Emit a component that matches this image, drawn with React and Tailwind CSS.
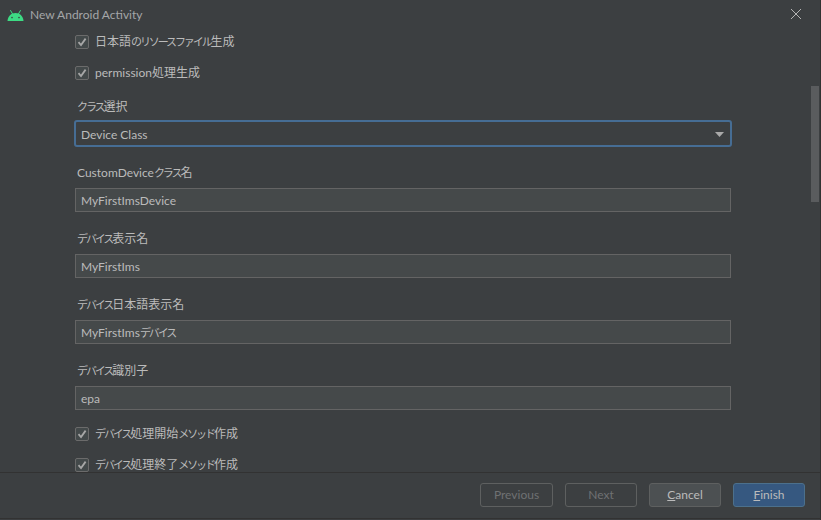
const font = { fontFamily: 'Lato, "Noto Sans CJK JP", "Liberation Sans", sans-serif' };

// Reference uses a narrow UI font: kana are squeezed, kanji stay full width
function Txt({ children }) {
  const parts = children.split(/([\u3040-\u30ff]+|[\u4e00-\u9fff]+)/);
  return (
    <>
      {parts.map((p, i) => {
        if (/[\u3040-\u30ff]/.test(p)) return <span key={i} className="text-[11px] tracking-[-2.1px]">{p}</span>;
        if (/[\u4e00-\u9fff]/.test(p)) return <span key={i} className="text-[12px]">{p}</span>;
        return <span key={i}>{p}</span>;
      })}
    </>
  );
}

function Check({ label, className }) {
  return (
    <div className={"flex items-center h-[15px] " + className}>
      <span className="w-[14px] h-[14px] flex items-center justify-center rounded-[2px] border border-[#6b6b6b] bg-[#43494a] shrink-0">
        <svg width="10" height="10" viewBox="0 0 10 10" fill="none">
          <path d="M1.5 5.2 L4 8 L8.6 1.6" stroke="#a7a7a7" strokeWidth="1.8" />
        </svg>
      </span>
      <span className="ml-[6px] text-[12px] leading-[15px] text-[#bbbbbb] whitespace-nowrap"><Txt>{label}</Txt></span>
    </div>
  );
}

function Field({ label, value, className }) {
  return (
    <div className={"flex flex-col " + className}>
      <div className="pl-[2px] h-[16px] text-[12px] leading-[18px] text-[#bbbbbb]"><Txt>{label}</Txt></div>
      <div className="mt-[8px] h-[24px] border border-[#646464] bg-[#45494a] pl-[5px] text-[12px] leading-[24px] text-[#bbbbbb]"><Txt>{value}</Txt></div>
    </div>
  );
}

function FooterButton({ children, className }) {
  return (
    <div className={"h-[24px] flex items-center justify-center rounded-[3px] border text-[12px] " + className}>{children}</div>
  );
}

export default function App() {
  return (
    <div style={font} className="relative w-[821px] h-[520px] bg-[#3c3f41] flex flex-col overflow-hidden border-r border-[#323232]">
      {/* Title bar */}
      <div className="h-[30px] shrink-0 flex items-center pl-[7px] pr-[18px]">
        <svg width="17" height="11" viewBox="0 0 17 11" fill="#3ddc84">
          <path d="M0.5 11 C0.8 6.5 4 3 8.5 3 C13 3 16.2 6.5 16.5 11 Z" />
          <path d="M3.4 0.2 L5.6 4 M13.6 0.2 L11.4 4" stroke="#3ddc84" strokeWidth="1" />
          <circle cx="5" cy="7.6" r="0.8" fill="#3c3f41" />
          <circle cx="12" cy="7.6" r="0.8" fill="#3c3f41" />
        </svg>
        <span className="ml-[6px] text-[12px] text-[#a4a6a8]">New Android Activity</span>
        <svg className="ml-auto -mt-[2px]" width="12" height="12" viewBox="0 0 12 12" stroke="#b4b4b4" strokeWidth="1">
          <path d="M1 1 L11 11 M11 1 L1 11" />
        </svg>
      </div>

      {/* Scrolling form */}
      <div className="h-[442px] shrink-0 overflow-hidden pl-[75px] pr-[89px] pt-[4px]">
        <Check label="日本語のリソースファイル生成" />
        <Check label="permission処理生成" className="mt-[16px]" />
        <div className="mt-[18px] pl-[2px] h-[16px] text-[12px] leading-[18px] text-[#bbbbbb]"><Txt>クラス選択</Txt></div>
        <div className="mt-[6px] -mx-[1px] h-[27px] border-2 border-[#466d94] rounded-[3px] bg-[#3c3f41] flex items-center pl-[5px] pr-[6px] pt-[2px] text-[12px] text-[#bbbbbb]">
          Device Class
          <svg className="ml-auto" width="9" height="5" viewBox="0 0 9 5" fill="#a9a9a9">
            <path d="M0 0 H9 L4.5 5 Z" />
          </svg>
        </div>
        <Field label="CustomDeviceクラス名" value="MyFirstImsDevice" className="mt-[17px]" />
        <Field label="デバイス表示名" value="MyFirstIms" className="mt-[18px]" />
        <Field label="デバイス日本語表示名" value="MyFirstImsデバイス" className="mt-[18px]" />
        <Field label="デバイス識別子" value="epa" className="mt-[18px]" />
        <Check label="デバイス処理開始メソッド作成" className="mt-[16px]" />
        <Check label="デバイス処理終了メソッド作成" className="mt-[16px]" />
      </div>

      {/* Footer */}
      <div className="flex-1 border-t border-b border-[#323232] flex items-center justify-end pr-[15px] pb-[2px] mb-[1px] gap-[12px]">
        <FooterButton className="w-[73px] border-[#5e6060] text-[#6f7173]">Previous</FooterButton>
        <FooterButton className="w-[72px] border-[#5e6060] text-[#6f7173]">Next</FooterButton>
        <FooterButton className="w-[72px] border-[#5e6060] bg-[#4c5052] text-[#bbbbbb]"><span><u>C</u>ancel</span></FooterButton>
        <FooterButton className="w-[72px] border-[#4c708c] bg-[#365880] text-[#bbbbbb]"><span><u>F</u>inish</span></FooterButton>
      </div>

      {/* Overlay scrollbar */}
      <div className="absolute left-[811px] top-[86px] w-[8px] h-[116px] bg-[#5a5c5e]" />
    </div>
  );
}
